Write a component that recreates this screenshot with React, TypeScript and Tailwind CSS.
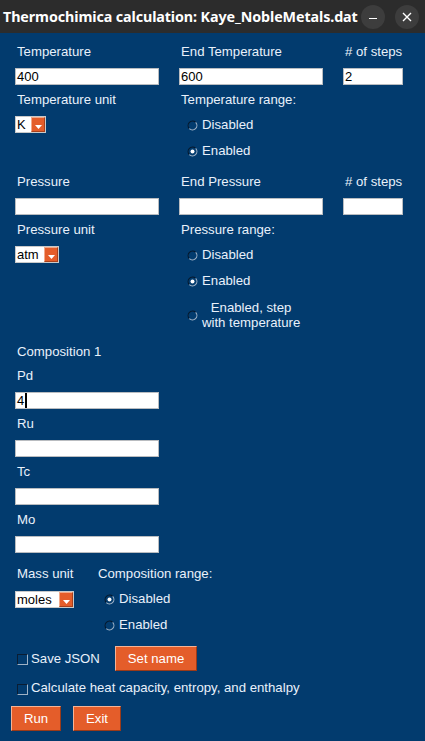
import React from 'react';

const font = "font-['Liberation_Sans',Arial,sans-serif]";

function Label({ children }: { children: React.ReactNode }) {
  return (
    <div className="h-6 flex items-center pl-[2px] pt-px text-[13.2px] text-[#e9f1fb] whitespace-nowrap">
      {children}
    </div>
  );
}

function TextInput({ value, width = 'w-[144px]', caret = false }: { value?: string; width?: string; caret?: boolean }) {
  return (
    <div className={`${width} h-[17px] bg-white border border-[#b9bcc0] flex items-center pl-px text-[13px] text-black leading-none`}>
      {value}
      {caret && <span className="w-[2px] h-[15px] bg-black ml-px" />}
    </div>
  );
}

function Dropdown({ value, width }: { value: string; width: string }) {
  return (
    <div className={`${width} h-[17px] bg-white border border-[#c9c9c9] flex items-stretch`}>
      <div className="flex-1 flex items-center pl-px text-[13px] text-black leading-none">{value}</div>
      <div className="w-[14px] bg-[#e45d2a] border-t border-l border-[#f2a98a] border-r-[#a8401c] border-b-[#a8401c] border-r border-b flex items-end justify-center pb-[2px]">
        <svg width="7" height="4" viewBox="0 0 7 4">
          <path d="M0 0H7L3.5 4Z" fill="#fff" />
        </svg>
      </div>
    </div>
  );
}

function RadioMark({ checked }: { checked?: boolean }) {
  return (
    <svg width="11" height="11" viewBox="0 0 11 11" className="shrink-0">
      <path d="M2.32 8.68A4.5 4.5 0 0 1 8.68 2.32" fill="none" stroke="#06182c" strokeWidth="1.1" />
      <path d="M8.68 2.32A4.5 4.5 0 0 1 2.32 8.68" fill="none" stroke="#9fb2c6" strokeWidth="1.1" />
      {checked && <circle cx="5.5" cy="5.5" r="2" fill="#fff" />}
    </svg>
  );
}

function Radio({ label, checked }: { label: string; checked?: boolean }) {
  return (
    <div className="h-[26px] flex items-center pl-[8px] pt-px text-[13.2px] text-[#e9f1fb]">
      <span className="mt-[2px]"><RadioMark checked={checked} /></span>
      <span className="ml-[4px]">{label}</span>
    </div>
  );
}

function Checkbox({ label }: { label: string }) {
  return (
    <div className="flex items-center pl-[2px] text-[13.2px] text-[#e9f1fb] whitespace-nowrap">
      <span className="w-[11px] h-[11px] mt-[3px] border-t border-l border-[#0a1d33] border-b border-r border-b-[#9fb2c6] border-r-[#9fb2c6]" />
      <span className="ml-[3px]">{label}</span>
    </div>
  );
}

function OrangeButton({ children, width }: { children: React.ReactNode; width: string }) {
  return (
    <div className={`${width} h-[25px] bg-[#e45d2a] border-t border-l border-[#f5b395] border-r border-b border-r-[#9c3a18] border-b-[#9c3a18] flex items-center justify-center text-[13.2px] text-white`}>
      {children}
    </div>
  );
}

export default function App() {
  return (
    <div className={`w-full h-screen flex flex-col ${font}`}>
      {/* title bar */}
      <div className="h-[33px] bg-[#2c2c2c] flex items-center shrink-0">
        <div className="pl-[3px] text-[14.3px] font-bold text-white font-['Noto_Sans',sans-serif] whitespace-nowrap tracking-[-0.1px]">
          Thermochimica calculation: Kaye_NobleMetals.dat
        </div>
        <div className="ml-auto mr-[6px] flex gap-[10px]">
          <div className="w-6 h-6 rounded-full bg-[#3d3d3d] flex items-center justify-center">
            <div className="w-[8px] h-[1.5px] bg-white mt-[4px]" />
          </div>
          <div className="w-6 h-6 rounded-full bg-[#3d3d3d] flex items-center justify-center">
            <svg width="10" height="10" viewBox="0 0 10 10">
              <path d="M1 1L9 9M9 1L1 9" stroke="#fff" strokeWidth="1.4" />
            </svg>
          </div>
        </div>
      </div>

      <div className="flex-1 bg-[#023b6e] pl-[15px] pt-[6px]">
        {/* temperature */}
        <div className="grid grid-cols-[164px_164px_60px]">
          <Label>Temperature</Label>
          <Label>End Temperature</Label>
          <Label># of steps</Label>
        </div>
        <div className="mt-[5px] grid grid-cols-[164px_164px_60px]">
          <TextInput value="400" />
          <TextInput value="600" />
          <TextInput value="2" width="w-[60px]" />
        </div>
        <div className="mt-[2px] grid grid-cols-[164px_164px]">
          <div>
            <Label>Temperature unit</Label>
            <div className="mt-[5px]">
              <Dropdown value="K" width="w-[31px]" />
            </div>
          </div>
          <div>
            <Label>Temperature range:</Label>
            <Radio label="Disabled" />
            <Radio label="Enabled" checked />
          </div>
        </div>

        {/* pressure */}
        <div className="mt-[6px] grid grid-cols-[164px_164px_60px]">
          <Label>Pressure</Label>
          <Label>End Pressure</Label>
          <Label># of steps</Label>
        </div>
        <div className="mt-[5px] grid grid-cols-[164px_164px_60px]">
          <TextInput />
          <TextInput />
          <TextInput width="w-[60px]" />
        </div>
        <div className="mt-[2px] grid grid-cols-[164px_164px]">
          <div>
            <Label>Pressure unit</Label>
            <div className="mt-[5px]">
              <Dropdown value="atm" width="w-[44px]" />
            </div>
          </div>
          <div>
            <Label>Pressure range:</Label>
            <Radio label="Disabled" />
            <Radio label="Enabled" checked />
            <div className="h-[42px] flex items-center pl-[8px] pt-px text-[13.2px] text-[#e9f1fb]">
              <span className="mt-[2px]"><RadioMark /></span>
              <span className="ml-[4px] text-center leading-[15px]">
                Enabled, step
                <br />
                with temperature
              </span>
            </div>
          </div>
        </div>

        {/* composition */}
        <div className="mt-[4px]">
          <Label>Composition 1</Label>
          <Label>Pd</Label>
          <div className="mt-[5px]"><TextInput value="4" caret /></div>
          <div className="mt-[2px]"><Label>Ru</Label></div>
          <div className="mt-[5px]"><TextInput /></div>
          <div className="mt-[2px]"><Label>Tc</Label></div>
          <div className="mt-[5px]"><TextInput /></div>
          <div className="mt-[2px]"><Label>Mo</Label></div>
          <div className="mt-[5px]"><TextInput /></div>
        </div>

        <div className="mt-[8px] grid grid-cols-[81px_auto]">
          <div>
            <Label>Mass unit</Label>
            <div className="mt-[6px]">
              <Dropdown value="moles" width="w-[59px]" />
            </div>
          </div>
          <div>
            <Label>Composition range:</Label>
            <Radio label="Disabled" checked />
            <Radio label="Enabled" />
          </div>
        </div>

        {/* options */}
        <div className="mt-[9px] h-[25px] grid grid-cols-[100px_auto] items-center">
          <Checkbox label="Save JSON" />
          <OrangeButton width="w-[82px]">Set name</OrangeButton>
        </div>
        <div className="mt-[5px] h-6 flex items-center">
          <Checkbox label="Calculate heat capacity, entropy, and enthalpy" />
        </div>
        <div className="mt-[6px] -ml-[4px] flex gap-[12px]">
          <OrangeButton width="w-[50px]">Run</OrangeButton>
          <OrangeButton width="w-[48px]">Exit</OrangeButton>
        </div>
      </div>
    </div>
  );
}
